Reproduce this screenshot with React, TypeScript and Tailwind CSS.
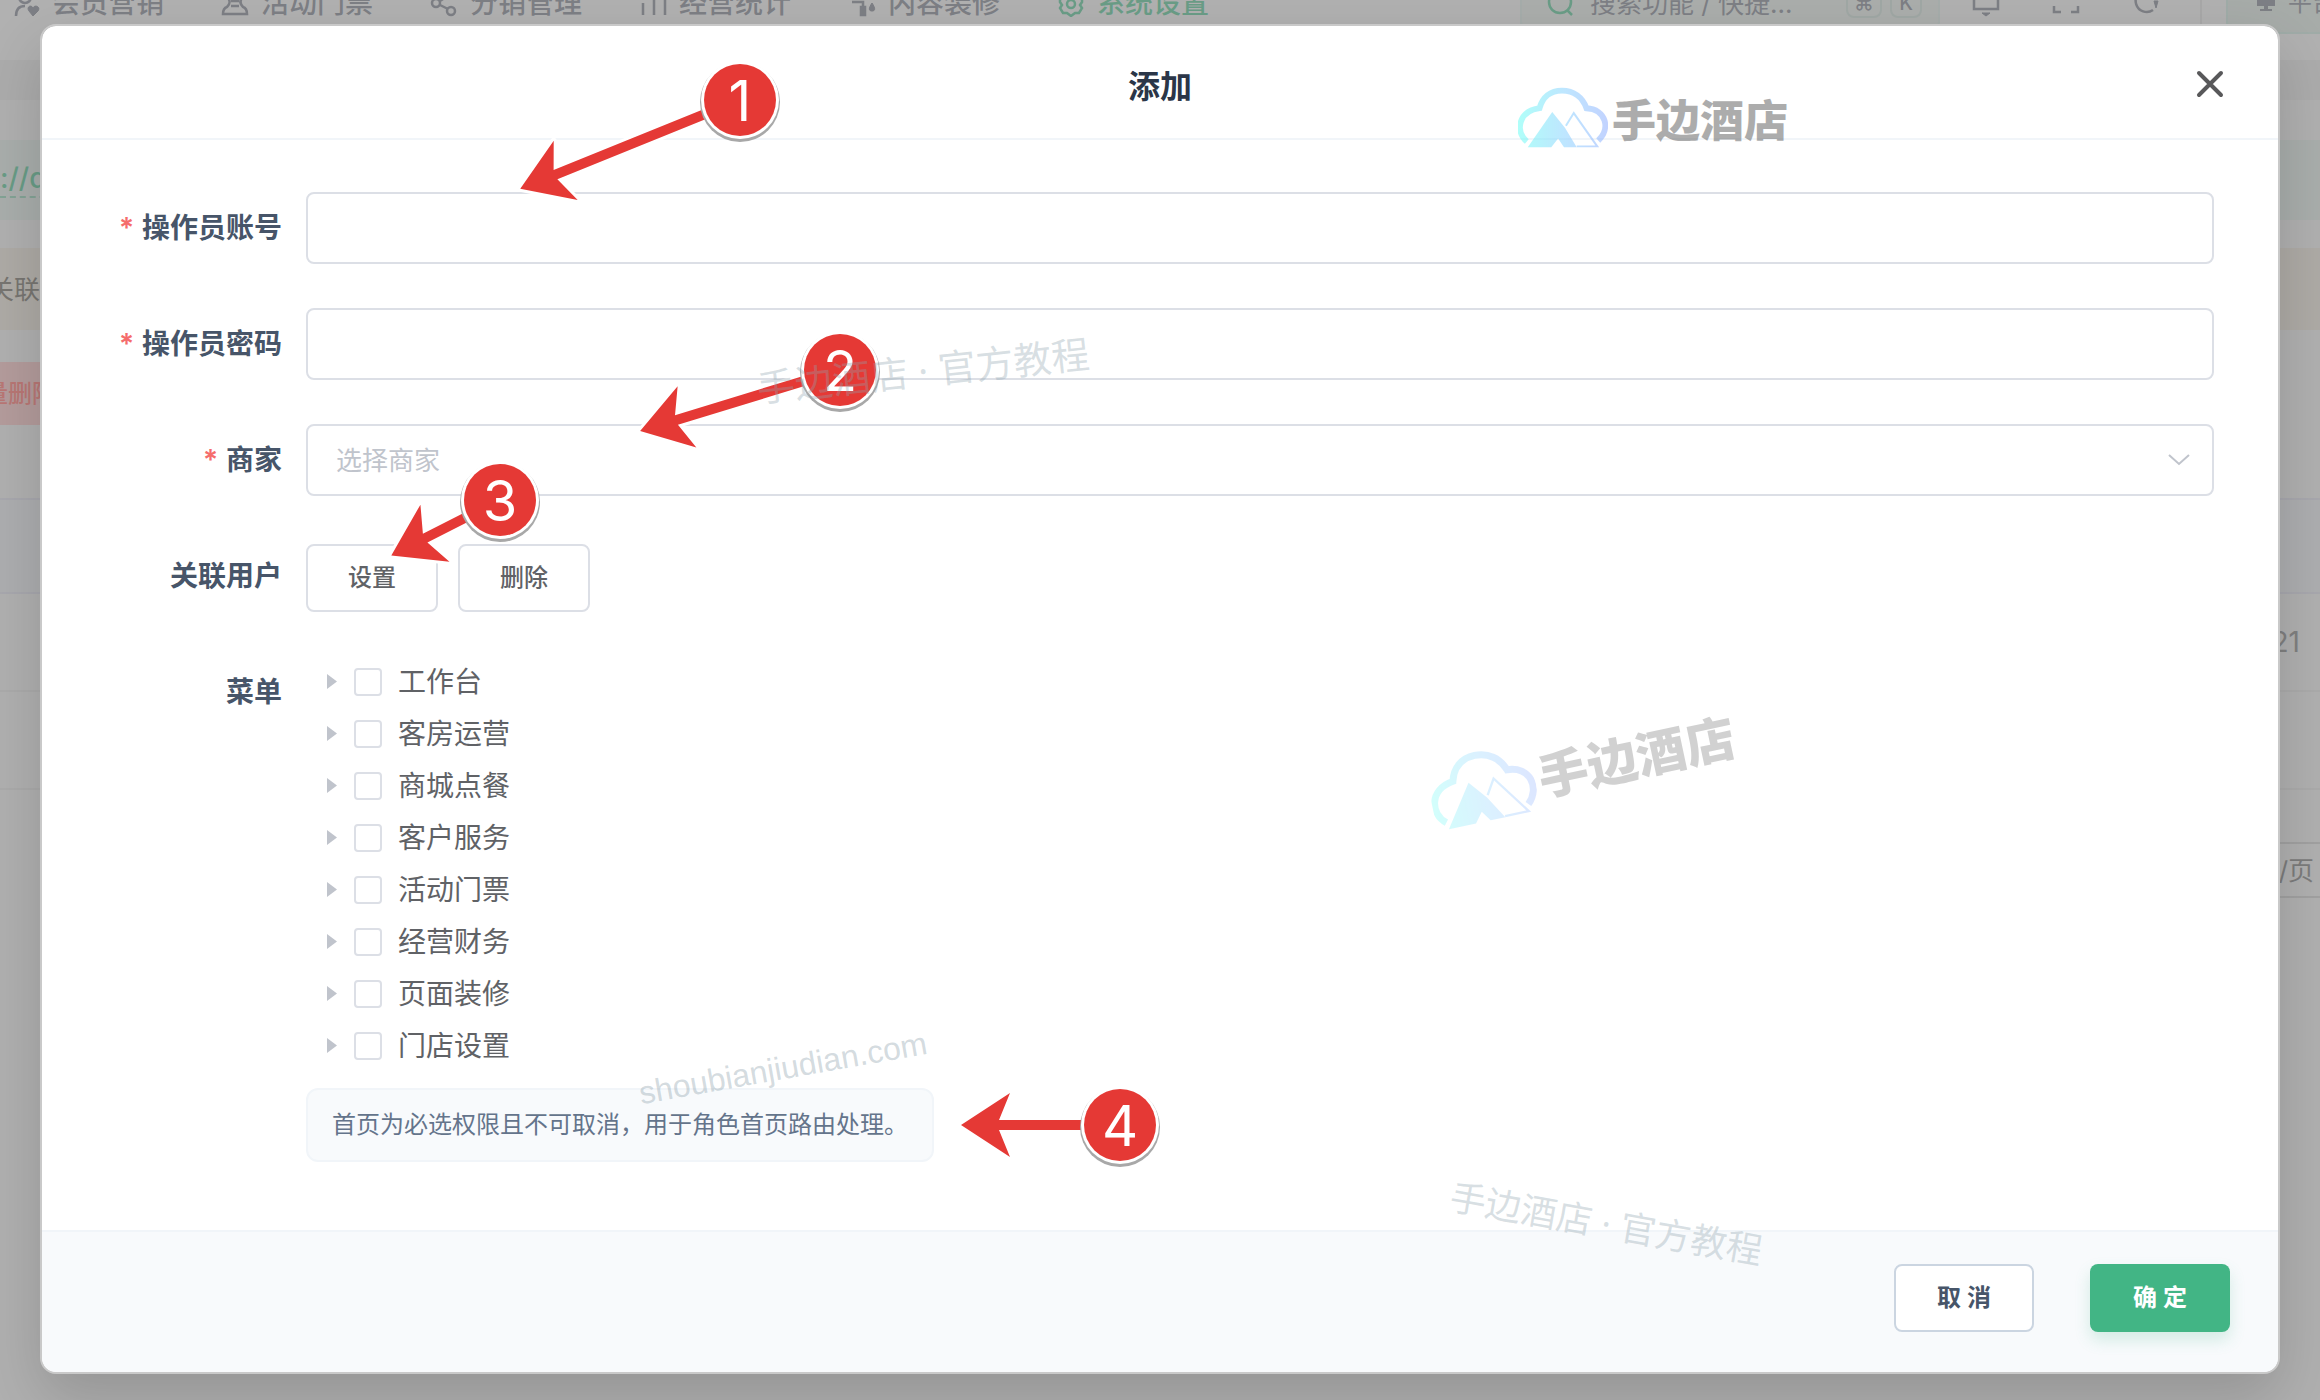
import type { ReactNode } from "react";

const navItems: { label: string; active?: boolean; icon: ReactNode }[] = [
  {
    label: "会员营销",
    icon: (
      <>
        <circle cx="13" cy="8" r="6" />
        <path d="M4 27c0-6 3-10 9-10" />
        <path d="M21 27l-4-5c-3-4 2-7 4-3 2-4 8-1 5 3z" fill="currentColor" strokeWidth="1" />
      </>
    ),
  },
  {
    label: "活动门票",
    icon: (
      <>
        <path d="M6 3h16v5c-4 4-3 7 0 10 3 1 4 3 4 7H2c0-4 1-6 4-7 3-3 4-6 0-10z" />
        <path d="M10 12h8M10 17h8" />
      </>
    ),
  },
  {
    label: "分销管理",
    icon: (
      <>
        <circle cx="6" cy="14" r="4" />
        <circle cx="21" cy="22" r="4" />
        <circle cx="20" cy="5" r="4" />
        <path d="M10 16l8 4M10 12l6-4" />
      </>
    ),
  },
  { label: "经营统计", icon: <path d="M4 14v12M15 6v20M26 3v23" /> },
  {
    label: "内容装修",
    icon: (
      <>
        <path d="M4 3h18v6H4zM4 13h11v5" />
        <path d="M13 18h4v8h-4z" fill="currentColor" />
        <path d="M24 14c4 6 3 8 0 8s-4-2 0-8z" fill="currentColor" strokeWidth="1" />
      </>
    ),
  },
  {
    label: "系统设置",
    active: true,
    icon: (
      <>
        <path d="M10 3h8l2 4h5v6l-2 3 2 3-3 5h-4l-4 3-4-3H6l-3-5 2-3-2-3V7h5z" />
        <circle cx="14" cy="15" r="4" />
      </>
    ),
  },
];

const menus = ["工作台", "客房运营", "商城点餐", "客户服务", "活动门票", "经营财务", "页面装修", "门店设置"];

function Icon({ children }: { children: ReactNode }) {
  return (
    <svg viewBox="0 0 28 28" className="size-7 shrink-0" fill="none" stroke="currentColor" strokeWidth="2.5">
      {children}
    </svg>
  );
}

function Backdrop() {
  return (
    <div aria-hidden="true" className="absolute inset-0 flex flex-col overflow-hidden bg-[#b0b0b0] text-[#7d7f85]">
      <div className="-mt-14 flex h-[116px] shrink-0 items-center whitespace-nowrap bg-[#b1b1b1] pt-0.5 pl-3 text-[28px] font-medium">
        <div className="flex gap-[57px]">
          {navItems.map((item) => (
            <div key={item.label} className={item.active ? "flex items-center gap-3 text-[#6a9d87]" : "flex items-center gap-3"}>
              <Icon>{item.icon}</Icon>
              <span>{item.label}</span>
            </div>
          ))}
        </div>
        <div className="ml-auto flex items-center text-[26px] font-normal">
          <div className="flex h-[62px] w-[420px] items-center rounded-xl border-2 border-[#a6adab] bg-[#abaeac] pr-4 pl-6">
            <svg viewBox="0 0 28 28" className="mr-4 size-7 text-[#6a9d87]" fill="none" stroke="currentColor" strokeWidth="2.5">
              <circle cx="14" cy="13" r="11" />
              <path d="M21 21l5 5" />
            </svg>
            <span>搜索功能 / 快捷...</span>
            <span className="ml-auto flex gap-2 text-xl font-medium">
              <kbd className="flex h-[30px] w-9 items-center justify-center rounded-lg border-2 border-[#a0a8a5] font-[Inter,'DejaVu_Sans',sans-serif]">⌘</kbd>
              <kbd className="flex h-[30px] w-8 items-center justify-center rounded-lg border-2 border-[#a0a8a5] font-[Inter,sans-serif]">K</kbd>
            </span>
          </div>
          <div className="ml-8 flex gap-[52px]">
            <Icon>
              <path d="M2 3h24v17H2z" />
              <path d="M10 24h8l-4 3z" fill="currentColor" strokeWidth="1" />
            </Icon>
            <Icon>
              <path d="M2 8V2h7M19 2h7v6M2 17v6h7M26 17v6h-7" />
            </Icon>
            <Icon>
              <path d="M15 1A11 11 0 1 0 21 21" />
              <path d="M22 12l4 0l-2 7z" fill="currentColor" strokeWidth="1" />
            </Icon>
          </div>
          <div className="ml-10 h-12 w-0.5 bg-[#a8a8a8]" />
          <div className="ml-6 flex h-[62px] w-[94px] items-center gap-3 overflow-hidden rounded-l-xl border-2 border-r-0 border-[#a0aca8] bg-[#a7aca9] pl-7 text-2xl">
            <svg viewBox="0 0 20 20" className="size-5 shrink-0" fill="currentColor">
              <path d="M1 2h18v11H1zM8 13h4v3h4v2H4v-2h4z" />
            </svg>
            <span>平台</span>
          </div>
        </div>
      </div>
      <div className="h-10 shrink-0 bg-[#acacac]" />
      <div className="h-10 shrink-0 bg-[#b0b0b0]" />
      <div className="h-20 shrink-0 bg-[#a9aeac] pt-5">
        <span className="inline-block border-b-2 border-dashed border-[#83a395] text-[28px] leading-9 font-medium text-[#689c86]">://demo</span>
      </div>
      <div className="h-7 shrink-0" />
      <div className="flex h-[82px] shrink-0 items-center bg-[#aeaba6]">
        <span className="-ml-3 text-[26px] text-[#777571]">关联</span>
      </div>
      <div className="h-8 shrink-0" />
      <div className="flex h-[63px] shrink-0 items-center">
        <span className="-ml-4 flex h-full items-center bg-[#b49c9c] pr-6 text-2xl font-medium text-[#b97775]">量删除</span>
      </div>
      <div className="h-[73px] shrink-0" />
      <div className="h-24 shrink-0 border-y-2 border-[#a8a8ae] bg-[#adaeb0]" />
      <div className="flex h-[98px] shrink-0 items-center justify-end border-b-2 border-[#ababab] pr-5 text-[28px] text-[#808080]">21</div>
      <div className="h-[98px] shrink-0 border-b-2 border-[#ababab]" />
      <div className="h-[52px] shrink-0" />
      <div className="flex h-14 shrink-0 items-center justify-end">
        <span className="flex h-full items-center border-y-2 border-[#a1a1a1] pr-1.5 pl-8 text-[26px] text-[#7c7c7c]">/页</span>
      </div>
    </div>
  );
}

function Field({ label, htmlFor, required, children }: { label: string; htmlFor?: string; required?: boolean; children: ReactNode }) {
  return (
    <div className="grid grid-cols-[264px_1fr]">
      <label htmlFor={htmlFor} className="flex h-[72px] items-center justify-end pr-6 text-[28px] font-semibold text-[#475569]">
        {required && <span className="mr-2 text-[#f56c6c]">*</span>}
        {label}
      </label>
      <div>{children}</div>
    </div>
  );
}

const inputClass = "block h-[72px] w-full rounded-lg border-2 border-[#dcdfe6] bg-white px-7 text-[26px] text-[#606266] outline-none";

/* The arrow is drawn pointing left along the x axis, then turned around the badge centre. */
function Callout({ n, length, angle, place }: { n: number; length: number; angle: number; place: string }) {
  const arrow = `M${-length} 0 L${49 - length} -32 L${38 - length} -5 H-36 V5 H${38 - length} L${49 - length} 32 Z`;
  return (
    <svg viewBox="-40 -40 80 80" className={`pointer-events-none absolute size-20 overflow-visible ${place}`} role="img" aria-label={`步骤 ${n}`}>
      <g transform={`rotate(${angle})`}>
        <path d={arrow} fill="#e53935" stroke="#ffffff" strokeWidth="6" strokeLinejoin="round" />
        <path d={arrow} fill="#e53935" />
      </g>
      <circle cx="0" cy="2" r="40" fill="#a8a8a8" />
      <circle r="39" fill="#ffffff" />
      <circle r="36" fill="#e53935" />
      <text y="21" textAnchor="middle" fill="#ffffff" fontSize="56" fontFamily="Inter, sans-serif">
        {n}
      </text>
    </svg>
  );
}

function Logo({ id, place, art, text }: { id: string; place: string; art: string; text: string }) {
  return (
    <div className={`pointer-events-none absolute flex items-center whitespace-nowrap font-black text-[#5c5c5c] ${place}`}>
      <svg viewBox="0 0 92 63" className={art} fill="none">
        <defs>
          <linearGradient id={id} gradientUnits="userSpaceOnUse" x1="0" y1="0" x2="92" y2="0">
            <stop offset="0" stopColor="#62fff5" />
            <stop offset="0.5" stopColor="#7fd0ff" />
            <stop offset="1" stopColor="#86a8ff" />
          </linearGradient>
        </defs>
        <path d="M9 56C-3 46 0 25 22 22C25 11 33 4 45 4S66 11 70 22C90 23 95 43 82 55" stroke={`url(#${id})`} strokeWidth="6" />
        <path d="M35 26L10 62H34L41 53L47 62H60L48 42Z" fill={`url(#${id})`} />
        <path d="M49 40L57 27L81 61H60" stroke={`url(#${id})`} strokeWidth="2" />
      </svg>
      <span className={text}>手边酒店</span>
    </div>
  );
}

export default function App() {
  return (
    <div className="relative flex min-h-screen flex-col overflow-hidden font-[Inter,'Noto_Sans_CJK_SC',sans-serif]">
      <Backdrop />
      <div
        role="dialog"
        aria-labelledby="dialog-title"
        className="relative mx-10 mt-6 mb-[26px] flex grow flex-col rounded-2xl border-2 border-[#c9c9c9] bg-white bg-clip-padding shadow-[0_24px_60px_rgba(0,0,0,0.16)]"
      >
        <header className="grid h-[114px] grid-cols-[1fr_auto_1fr] items-center border-b-2 border-[#f1f5f9]">
          <h1 id="dialog-title" className="col-start-2 pt-2.5 text-[32px] font-semibold text-[#2b3648]">
            添加
          </h1>
          <button type="button" aria-label="关闭" className="mr-12 justify-self-end p-1 pt-2">
            <svg viewBox="0 0 32 32" className="size-8" fill="none" stroke="#58585a" strokeWidth="4" strokeLinecap="round">
              <path d="M5 5L27 27M27 5L5 27" />
            </svg>
          </button>
        </header>

        <form className="flex grow flex-col gap-11 pt-[52px] pr-16 pb-[68px]">
          <Field label="操作员账号" htmlFor="account" required>
            <input id="account" type="text" className={inputClass} />
          </Field>
          <Field label="操作员密码" htmlFor="password" required>
            <input id="password" type="password" className={inputClass} />
          </Field>
          <Field label="商家" htmlFor="merchant" required>
            <div className="relative">
              <select id="merchant" defaultValue="" className="block h-[72px] w-full appearance-none rounded-lg border-2 border-[#dcdfe6] bg-white px-7 text-[26px] text-[#c0c4cc] outline-none">
                <option value="">选择商家</option>
              </select>
              <svg viewBox="0 0 24 24" className="pointer-events-none absolute top-6 right-6 size-6" fill="none" stroke="#c0c4cc" strokeWidth="2">
                <path d="M3 7L13 16L23 7" />
              </svg>
            </div>
          </Field>
          <Field label="关联用户">
            <div className="-mb-1 flex h-[76px] items-center gap-5">
              {["设置", "删除"].map((t) => (
                <button key={t} type="button" className="h-[68px] w-[132px] rounded-lg border-2 border-[#dcdfe6] bg-white text-2xl font-medium text-[#606266]">
                  {t}
                </button>
              ))}
            </div>
          </Field>
          <Field label="菜单">
            <ul>
              {menus.map((m) => (
                <li key={m} className="flex h-[52px] items-center">
                  <button type="button" aria-label={`展开${m}`} className="flex w-12 justify-center pl-1">
                    <svg viewBox="0 0 10 16" className="h-4 w-2.5" fill="#c0c4cc">
                      <path d="M0 0L10 7.5L0 15Z" />
                    </svg>
                  </button>
                  <label className="flex items-center gap-4 text-[28px] text-[#606266]">
                    <input type="checkbox" className="size-7 appearance-none rounded border-2 border-[#dcdfe6] bg-white" />
                    {m}
                  </label>
                </li>
              ))}
            </ul>
            <p className="mt-4 w-fit rounded-xl border-2 border-[#f1f5f9] bg-[#f8fafc] px-6 py-[17px] text-2xl leading-9 text-[#64748b]">
              首页为必选权限且不可取消，用于角色首页路由处理。
            </p>
          </Field>
        </form>

        <footer className="flex justify-end gap-14 rounded-b-[14px] border-t-2 border-[#f1f5f9] bg-[#f8fafc] px-12 pt-8 pb-10">
          <button type="button" className="h-[68px] w-[140px] rounded-lg border-2 border-[#cbd5e1] bg-white text-2xl font-semibold text-[#475569]">
            取 消
          </button>
          <button type="button" className="h-[68px] w-[140px] rounded-lg bg-[#42b585] text-2xl font-semibold text-white shadow-[0_8px_16px_rgba(66,181,133,0.2)]">
            确 定
          </button>
        </footer>

        <Callout n={1} length={237} angle={-22} place="left-[658px] top-[34px]" />
        <Callout n={2} length={209} angle={-17} place="left-[758px] top-[304px]" />
        <Callout n={3} length={122} angle={-27} place="left-[418px] top-[434px]" />
        <Callout n={4} length={159} angle={0} place="left-[1038px] top-[1059px]" />

        <Logo id="logo-a" place="right-[490px] top-[60px] gap-1 opacity-50" art="h-[63px] w-[90px]" text="pt-2 text-[44px] leading-[55px]" />
        <Logo id="logo-b" place="right-[541px] top-[702px] -rotate-12 gap-1 opacity-28" art="h-[74px] w-[106px]" text="pt-2 text-[50px] leading-[66px]" />
        <p className="pointer-events-none absolute top-[318px] left-[714px] -rotate-6 font-['Noto_Sans','Noto_Sans_CJK_SC',sans-serif] text-[38px] leading-[52px] whitespace-nowrap text-[#90a4ae]/35">
          手边酒店 · 官方教程
        </p>
        <p className="pointer-events-none absolute top-[1022px] left-[595px] -rotate-10 font-['Liberation_Sans',sans-serif] text-[32px] leading-10 whitespace-nowrap text-[#90a4ae]/40">
          shoubianjiudian.com
        </p>
        <p className="pointer-events-none absolute top-[1172px] right-[514px] rotate-10 font-['Noto_Sans','Noto_Sans_CJK_SC',sans-serif] text-[36px] leading-[52px] whitespace-nowrap text-[#90a4ae]/35">
          手边酒店 · 官方教程
        </p>
      </div>
    </div>
  );
}
